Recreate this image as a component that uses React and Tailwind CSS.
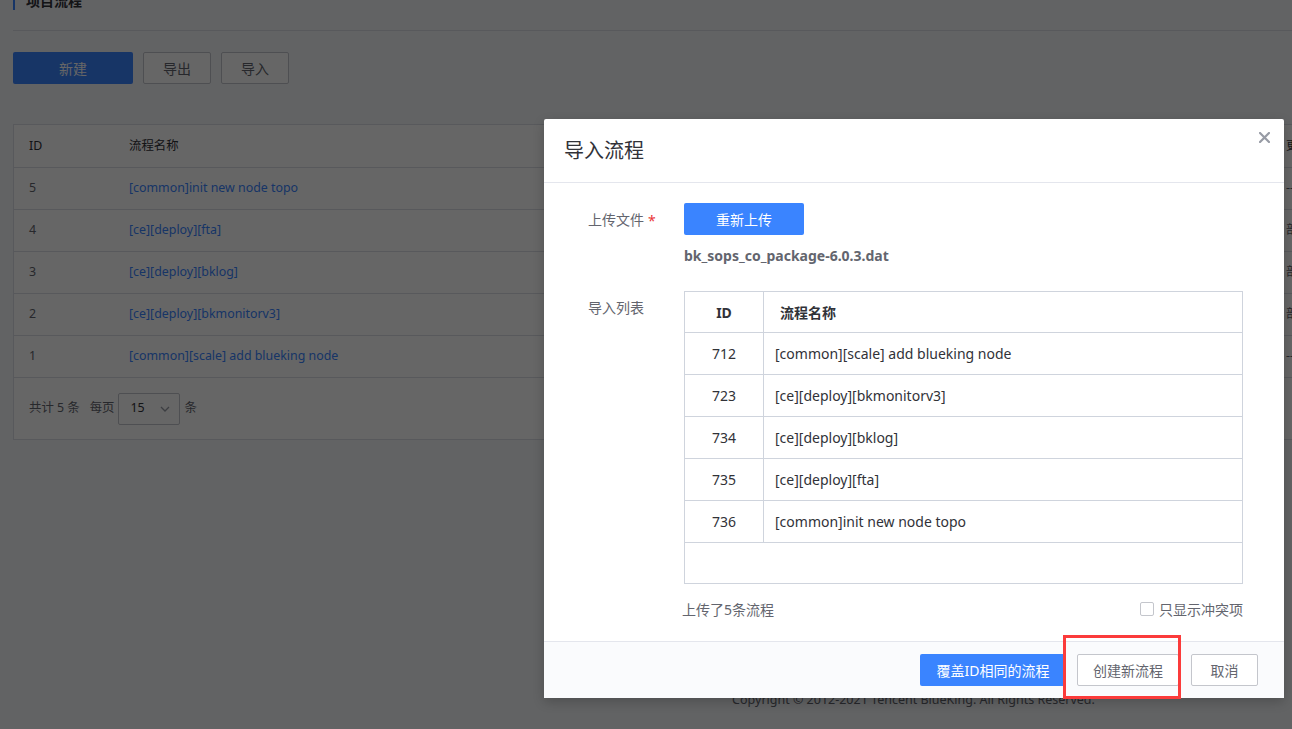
import React from 'react';

const pageRows = [
  { id: 5, name: '[common]init new node topo', extra: '--' },
  { id: 4, name: '[ce][deploy][fta]', extra: '部署' },
  { id: 3, name: '[ce][deploy][bklog]', extra: '部署' },
  { id: 2, name: '[ce][deploy][bkmonitorv3]', extra: '部署' },
  { id: 1, name: '[common][scale] add blueking node', extra: '--' },
];

const importRows = [
  { id: 712, name: '[common][scale] add blueking node' },
  { id: 723, name: '[ce][deploy][bkmonitorv3]' },
  { id: 734, name: '[ce][deploy][bklog]' },
  { id: 735, name: '[ce][deploy][fta]' },
  { id: 736, name: '[common]init new node topo' },
];

function ImportDialog() {
  return (
    <div className="absolute left-[544px] top-[119px] flex h-[579px] w-[740px] flex-col rounded-[2px] bg-white shadow-[0_4px_12px_rgba(0,0,0,0.2)]">
      {/* header */}
      <div className="relative flex h-[64px] shrink-0 items-center border-b border-[#e4e6ed] pl-[20px]">
        <h3 className="text-[20px] leading-[28px] text-[#313238]">导入流程</h3>
        <svg className="absolute right-[14px] top-[13px]" width="11" height="11" viewBox="0 0 11 11">
          <path d="M1 1L10 10M10 1L1 10" stroke="#979ba5" strokeWidth="2.2" strokeLinecap="square" />
        </svg>
      </div>

      {/* body */}
      <div className="flex-1 pt-[20px] text-[14px]">
        <div className="flex">
          <div className="ml-[44px] flex h-[32px] w-[96px] items-center text-[#63656e]">
            上传文件<span className="ml-[4px] mt-[2px] text-[#ea3636]">*</span>
          </div>
          <div>
            <button className="h-[32px] w-[120px] rounded-[2px] bg-[#3a84ff] text-[14px] text-white">重新上传</button>
            <div className="mt-[11px] h-[20px] text-[14px] font-bold leading-[20px] text-[#63656e]">bk_sops_co_package-6.0.3.dat</div>
          </div>
        </div>

        <div className="mt-[25px] flex">
          <div className="ml-[44px] w-[96px] pt-[1px] leading-[32px] text-[#63656e]">导入列表</div>
          <div className="w-[559px]">
            <div className="border border-[#cfd4dd]">
              <div className="flex h-[41px] border-b border-[#cfd4dd] font-bold text-[#313238]">
                <div className="flex w-[79px] items-center justify-center border-r border-[#cfd4dd]">ID</div>
                <div className="flex items-center pl-[16px]">流程名称</div>
              </div>
              {importRows.map((r) => (
                <div key={r.id} className="flex h-[42px] border-b border-[#cfd4dd] text-[#313238]">
                  <div className="flex w-[79px] items-center justify-center border-r border-[#cfd4dd]">{r.id}</div>
                  <div className="flex items-center pl-[11px]">{r.name}</div>
                </div>
              ))}
              <div className="h-[40px]"></div>
            </div>
            <div className="-ml-[2px] mt-[15px] flex h-[20px] items-center justify-between text-[#63656e]">
              <span>上传了5条流程</span>
              <label className="flex items-center">
                <span className="h-[14px] w-[14px] rounded-[2px] border border-[#c4c6cc] bg-white"></span>
                <span className="ml-[5px]">只显示冲突项</span>
              </label>
            </div>
          </div>
        </div>
      </div>

      {/* footer */}
      <div className="flex h-[57px] shrink-0 items-center justify-end border-t border-[#e4e6ed] bg-[#fafbfd] pr-[26px] text-[14px]">
        <button className="h-[32px] w-[146px] rounded-[2px] bg-[#3a84ff] text-white">覆盖ID相同的流程</button>
        <button className="ml-[11px] h-[32px] w-[102px] rounded-[2px] border border-[#c4c6cc] bg-white text-[#63656e]">创建新流程</button>
        <button className="ml-[12px] h-[32px] w-[67px] rounded-[2px] border border-[#c4c6cc] bg-white text-[#63656e]">取消</button>
      </div>
    </div>
  );
}

export default function App() {
  return (
    <div className="relative h-[729px] w-[1292px] overflow-hidden bg-[#f5f7fa] font-['Noto_Sans','Noto_Sans_CJK_SC',sans-serif]">
      {/* page under the mask */}
      <div className="flex w-[1800px] flex-col pl-[13px]">
        <div className="flex h-[31px] flex-col border-b border-[#dcdee5]">
          <div className="-mt-[10px] flex h-[20px] items-center border-l-2 border-[#3a84ff] pl-[11px] text-[14px] font-bold text-[#313238]">
            项目流程
          </div>
        </div>

        <div className="mt-[21px] flex gap-[10px] text-[14px]">
          <button className="h-[32px] w-[120px] rounded-[2px] bg-[#3a84ff] text-white">新建</button>
          <button className="h-[32px] w-[68px] rounded-[2px] border border-[#c4c6cc] bg-white text-[#63656e]">导出</button>
          <button className="h-[32px] w-[68px] rounded-[2px] border border-[#c4c6cc] bg-white text-[#63656e]">导入</button>
        </div>

        <div className="mt-[40px] border border-[#dcdee5] bg-white text-[12.4px]">
          <div className="flex h-[43px] items-center border-b border-[#dcdee5] text-[#313238]">
            <div className="w-[100px] pl-[15px]">ID</div>
            <div className="w-[1157px] pl-[15px]">流程名称</div>
            <div className="pl-[15px]">更新人</div>
          </div>
          {pageRows.map((r) => (
            <div key={r.id} className="flex h-[42px] items-center border-b border-[#dcdee5]">
              <div className="w-[100px] pl-[15px] text-[#63656e]">{r.id}</div>
              <div className="w-[1157px] pl-[15px] text-[#3a84ff]">{r.name}</div>
              <div className="pl-[15px] text-[#63656e]">{r.extra}</div>
            </div>
          ))}
          <div className="flex h-[61px] items-center pl-[15px] text-[#63656e]">
            <span>共计 5 条</span>
            <span className="ml-[10px]">每页</span>
            <div className="ml-[4px] flex h-[32px] w-[62px] items-center justify-between rounded-[2px] border border-[#c4c6cc] pl-[11px] pr-[9px]">
              <span className="text-[#313238]">15</span>
              <svg width="10" height="6" viewBox="0 0 10 6">
                <path d="M1 1l4 4 4-4" fill="none" stroke="#979ba5" strokeWidth="1.3" />
              </svg>
            </div>
            <span className="ml-[4px]">条</span>
          </div>
        </div>

        <div className="ml-[14px] mt-[252px] text-center text-[12.5px] leading-[16px] text-[#63656e]">
          Copyright © 2012-2021 Tencent BlueKing. All Rights Reserved.
        </div>
      </div>

      {/* mask */}
      <div className="absolute inset-0 bg-black/60"></div>

      <ImportDialog />

      {/* red annotation box */}
      <div className="absolute left-[1063px] top-[635px] h-[64px] w-[118px] border-[3px] border-[#fb3b3b]"></div>
    </div>
  );
}
